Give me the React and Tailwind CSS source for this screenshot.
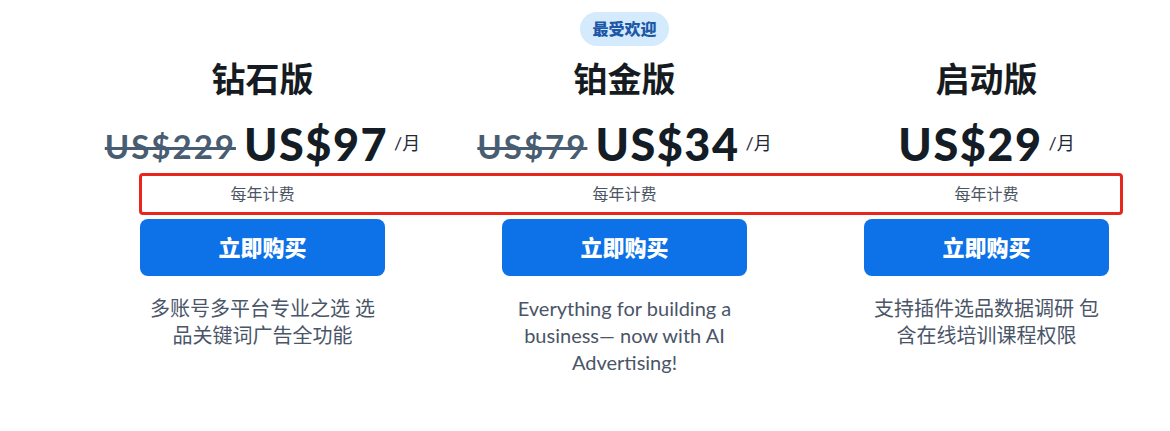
import React from 'react';

const FONT = { fontFamily: 'Lato, "Noto Sans CJK SC", sans-serif' };

const plans = [
    {
        name: '钻石版',
        oldPrice: 'US$229',
        price: 'US$97',
        desc: '多账号多平台专业之选 选品关键词广告全功能',
    },
    {
        name: '铂金版',
        oldPrice: 'US$79',
        price: 'US$34',
        desc: 'Everything for building a business— now with AI Advertising!',
        badge: '最受欢迎',
    },
    {
        name: '启动版',
        price: 'US$29',
        desc: '支持插件选品数据调研 包含在线培训课程权限',
    },
];

const PlanColumn = ({ plan }) => (
    <div className="w-[245px] flex flex-col items-center">
        {/* Badge slot */}
        <div className="h-[46px] pt-3 flex justify-center">
            {plan.badge && (
                <span className="h-[34px] px-[12px] rounded-full bg-[#d4eafd] text-[#1d58a6] text-[16px] font-black flex items-center">
                    {plan.badge}
                </span>
            )}
        </div>

        <h2 className="mt-[13px] h-[40px] leading-[40px] text-[34px] font-bold text-[#161b22]">{plan.name}</h2>

        {/* Price */}
        <div className="mt-[20px] h-[50px] w-full flex justify-center items-center whitespace-nowrap">
            {plan.oldPrice && (
                <span className="mr-[8px] text-[33px] tracking-[2px] font-bold line-through decoration-[3px] text-[#485c72] leading-none mt-[4px]">
                    {plan.oldPrice}
                </span>
            )}
            <span className="text-[45px] tracking-[1.5px] font-black text-[#141c26] leading-none">{plan.price}</span>
            <span className="ml-[6px] text-[18px] text-[#1f2937] leading-none mb-[2px]">/月</span>
        </div>

        <div className="mt-[5px] h-[40px] flex items-center text-[16px] text-[#4b5563]">每年计费</div>

        <button className="mt-[5px] w-full h-[57px] rounded-lg bg-[#0d71e7] text-white text-[22px] font-black">
            立即购买
        </button>

        <p className="mt-[19px] w-[235px] text-center text-[20px] leading-[27px] text-[#4a5568]">{plan.desc}</p>
    </div>
);

const App = () => {
    return (
        <div className="relative w-[1170px] h-[431px] bg-white overflow-hidden" style={FONT}>
            <div className="pl-[140px] flex gap-[117px]">
                {plans.map((p) => (
                    <PlanColumn key={p.name} plan={p} />
                ))}
            </div>

            {/* Highlight annotation */}
            <div className="absolute left-[139px] top-[173px] w-[984px] h-[42px] border-[3px] border-[#e8261c] rounded-[4px] pointer-events-none" />
        </div>
    );
};

export default App;
